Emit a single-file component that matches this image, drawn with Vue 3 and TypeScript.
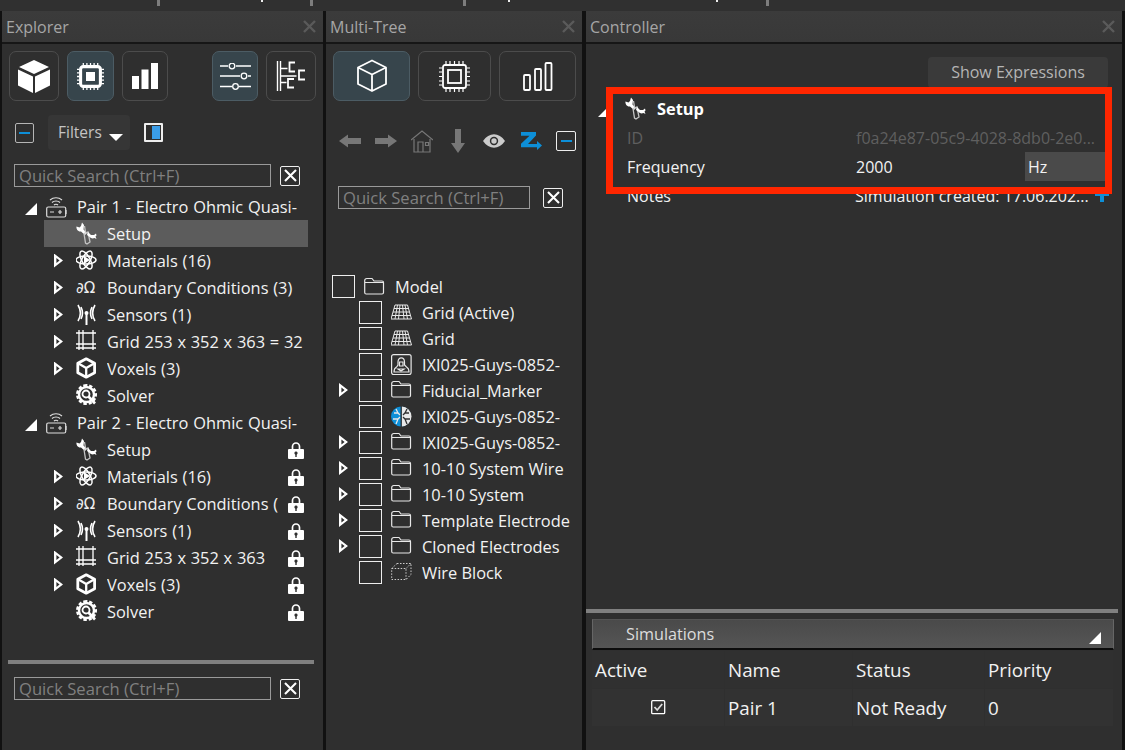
<script setup lang="ts">
const I: Record<string, string> = {
  cubeFill: `<path fill="#fff" d="M16 0 31 7 16 14 1 7ZM0 9.500l15 7V33L0 25.500ZM32 9.500V25.500L17 33V16.500Z"/>`,
  chipFill: `<g fill="none" stroke="#fff"><rect x="4" y="4" width="22" height="22" rx="3" stroke-width="3.4"/><path stroke-width="1.400" d="M7 0v3M11 0v3M15 0v3M19 0v3M23 0v3M7 27v3M11 27v3M15 27v3M19 27v3M23 27v3M0 7h3M0 11h3M0 15h3M0 19h3M0 23h3M27 7h3M27 11h3M27 15h3M27 19h3M27 23h3"/></g><rect x="10" y="10" width="10" height="10" fill="#fff"/>`,
  barsFill: `<path fill="#fff" d="M1 14h7v13H1ZM10.500 7.500h7V27h-7ZM20 1h7v26h-7Z"/>`,
  sliders: `<g fill="none" stroke="#fff" stroke-width="1.300"><path d="M0 3h8M16 3h15M0 13h20M28 13h3M0 23.500h12M19 23.500h12"/><circle cx="12" cy="3" r="2.800"/><circle cx="24" cy="13" r="2.800"/><circle cx="15.500" cy="23.500" r="2.800"/></g>`,
  branch: `<g fill="none" stroke="#fff" stroke-width="1.400"><path d="M1.500 1v30M4.500 1v30M4.500 8.500h7M4.500 16h16M4.500 22.500h6"/><path stroke-width="1.800" d="M19 2.500h-5.500v9h5.500M29 10.500h-6v9h6M18 19h-6v8.500h6"/></g>`,
  cubeOut: `<g fill="none" stroke="#fff" stroke-width="1.800" stroke-linejoin="round"><path d="M16 1.500 30 8.500V25L16 32 2 25V8.500ZM2 8.500 16 15.500 30 8.500M16 15.500V32"/></g>`,
  chipOut: `<g fill="none" stroke="#fff"><rect x="4" y="4" width="23" height="23" rx="2" stroke-width="1.800"/><rect x="9" y="9" width="13" height="13" stroke-width="1.800"/><path stroke-width="1.200" d="M7 0v3M11 0v3M15.500 0v3M20 0v3M24 0v3M7 28v3M11 28v3M15.500 28v3M20 28v3M24 28v3M0 7h3M0 11h3M0 15.500h3M0 20h3M0 24h3M28 7h3M28 11h3M28 15.500h3M28 20h3M28 24h3"/></g>`,
  barsOut: `<g fill="none" stroke="#fff" stroke-width="1.800"><rect x="1" y="13" width="6" height="15" rx="1"/><rect x="12" y="7" width="6" height="21" rx="1"/><rect x="22.500" y="1" width="6" height="27" rx="1"/></g>`,
  battery: `<g fill="none" stroke="#ddd" stroke-width="1.200"><rect x=".7" y="11" width="19" height="10" rx="1.500"/><path d="M4 16h4M12 16h4M14 14v4M20 14v4"/><path d="M6 6.500c2-2 6-2 8 0M4 4c3.500-3 8.500-3 12 0M8 9c1-1 3-1 4 0"/></g>`,
  wrench: `<path fill="#fff" d="M6 .5 5 4 3.500 5.500 .5 4.500C0 7 2 10 5 9.500L9 13l2-2L7.500 7.500 8 3Z"/><path fill="none" stroke="#c4c4c4" stroke-width="1.300" d="M8.500 4 9.500 10M8 11.500l4-1.500 2 10-3 2-1.500-1Z"/><path fill="#fff" d="M12 10l3 3h3l2-1.500.5 2-1 1 1 2.500-2-1-2 .5-1.500-.5-4-3Z"/>`,
  atom: `<g fill="none" stroke="#fff" stroke-width="1.500"><ellipse cx="10" cy="11" rx="10" ry="4"/><ellipse cx="10" cy="11" rx="10" ry="4" transform="rotate(60 10 11)"/><ellipse cx="10" cy="11" rx="10" ry="4" transform="rotate(120 10 11)"/></g><path fill="#fff" d="M8 7l6 4-6 4Z"/>`,
  sensor: `<g fill="none" stroke="#fff" stroke-width="1.600"><path d="M10.500 11v11" stroke-width="2"/><path d="M2 2c3 5 3 11 0 16M5 4c2 4 2 8 0 12M19 2c-3 5-3 11 0 16M16 4c-2 4-2 8 0 12"/></g><circle cx="10.500" cy="10" r="2" fill="#fff"/>`,
  grid: `<g fill="none" stroke="#fff" stroke-width="1.300"><path d="M3 0v20M7 0v20M17 0v20M0 3h20M0 14h20M0 18h20"/></g>`,
  voxel: `<g fill="none" stroke="#fff" stroke-linejoin="round"><path stroke-width="2.800" d="M10.200 1.800 18.600 6.300V15.700L10.200 20.200 1.800 15.700V6.300Z"/><path stroke-width="2.300" d="M2.500 6.500 10.200 11 18 6.500M10.200 11V20"/></g>`,
  solver: `<g fill="none" stroke="#fff"><path stroke-width="3" stroke-dasharray="3.200 1.800" d="M10.500 1.500a9 9 0 1 0 .01 0"/><circle cx="10.500" cy="10.500" r="7.500" stroke-width="2.400"/><circle cx="10" cy="10" r="3.500" stroke-width="1.800"/><path stroke-width="2.600" d="M12.500 12.500l6.500 7"/></g>`,
  lock: `<path fill="none" stroke="#fff" stroke-width="1.700" d="M4.500 8V5.500a3.500 3.500 0 0 1 7 0V8"/><path fill="#fff" fill-rule="evenodd" d="M1 8h14a1 1 0 0 1 1 1v8a1 1 0 0 1-1 1H1a1 1 0 0 1-1-1V9a1 1 0 0 1 1-1ZM8 10.500a1.700 1.700 0 0 0-.7 3.200V16h1.400v-2.300A1.700 1.700 0 0 0 8 10.500Z"/>`,
  folder: `<path fill="none" stroke="#e8e8e8" stroke-width="1.200" d="M.7 3.500A2 2 0 0 1 2.700 1.500H8l2 2.500h8a1.500 1.500 0 0 1 1.500 1.500V15.500a1.500 1.500 0 0 1-1.500 1.500H2.200a1.500 1.500 0 0 1-1.500-1.500ZM.7 5.500h19"/>`,
  mesh: `<g fill="none" stroke="#e8e8e8" stroke-width="1"><path d="M4 3h12.500L20.500 17H0ZM3 6.500h14.500M2 10h16.500M1 13.500h18.500M6.500 3 4 17M9 3 7.500 17M11.500 3 13 17M14 3 16.500 17"/></g>`,
  mona: `<g fill="none" stroke="#e8e8e8" stroke-width="1.200"><rect x=".6" y=".6" width="19.500" height="20" rx="2"/><path d="M7 8c0-5.500 6.500-5.500 6.500 0v3l2 2c2 1 2.500 3 2.500 5H3c0-2 .5-4 2.500-5L7 11Z"/><path d="M8.500 8h3.500v4H8.500ZM7 15h6l-3 2Z"/></g>`,
  brain: `<circle cx="10" cy="10.500" r="10" fill="#0d8fd8"/><path fill="#e8e8e8" d="M10.500 .5a10 10 0 0 1 0 20Z"/><g fill="none" stroke-width="1.300"><path stroke="#e8e8e8" d="M3 7h4l2 2M2 13h5l2-2M5 3l2 4M5 18l2-5"/><path stroke="#2f2f2f" d="M10.200 0v21M18 7h-4l-2 2M19 13h-5l-2-2M16 3l-2 4M16 18l-2-5"/></g>`,
  wire: `<g fill="none" stroke="#ccc" stroke-width="1" stroke-dasharray="1.500 1.500"><path d="M6 1.500h14v11l-5 5H.7V6.500ZM.7 6.500H15V17.500M15 6.500l5-5"/></g>`,
  left: `<path fill="#777" d="M0 7l9-6.500V4h13v6H9v3.500Z"/>`,
  right: `<path fill="#777" d="M22 7l-9-6.500V4H0v6h13v3.500Z"/>`,
  home: `<g fill="none" stroke="#777" stroke-width="1.200"><path d="M0 10 11 1l11 9"/><path d="M3 9v13h16V9M7 22V12h5v10M14.500 12.500h3v3h-3Z"/></g>`,
  down: `<path fill="#777" d="M4 0h6v14h4l-7 10-7-10h4Z"/>`,
  eye: `<path fill="#ccc" d="M0 7c6-9 16-9 22 0-6 9-16 9-22 0Z"/><circle cx="11" cy="7" r="4.200" fill="#2f2f2f"/><circle cx="11" cy="7" r="2.700" fill="#ccc"/>`,
  zed: `<path fill="#0d8fd8" d="M1 1h15v3.500L8 13h9v-3l5 4.500-5 4.500v-2.800H1v-3.500L9.500 4.800H1Z"/>`,
  plus: `<path fill="#0d8fd8" d="M5 0h4v3h5v4H9v6H5V7H0V3h5Z"/>`,
  check: `<rect x=".7" y=".7" width="13" height="13" rx="1" fill="none" stroke="#fff" stroke-width="1.300"/><path fill="none" stroke="#ddd" stroke-width="1.800" d="M3.500 7l2.700 3 5-6"/>`,
  x: `<path fill="none" stroke="#fff" stroke-width="2.100" d="M1 1l11 11M12 1 1 12"/>`,
  closeX: `<path fill="none" stroke="#5a5a5a" stroke-width="2.400" d="M1 1l11 11M12 1 1 12"/>`,
}

interface ERow { t: string; ic?: string; group?: boolean; exp?: boolean; sel?: boolean; lock?: boolean }
const pair = (n: number, last: string, bc: string, lock: boolean, sel: boolean): ERow[] => [
  { t: `Pair ${n} - Electro Ohmic Quasi-`, group: true, ic: 'battery' },
  { t: 'Setup', ic: 'wrench', sel, lock },
  { t: 'Materials (16)', ic: 'atom', exp: true, lock },
  { t: bc, ic: 'omega', exp: true, lock },
  { t: 'Sensors (1)', ic: 'sensor', exp: true, lock },
  { t: last, ic: 'grid', exp: true, lock },
  { t: 'Voxels (3)', ic: 'voxel', exp: true, lock },
  { t: 'Solver', ic: 'solver', lock },
]
const explorer: ERow[] = [
  ...pair(1, 'Grid 253 x 352 x 363 = 32', 'Boundary Conditions (3)', false, true),
  ...pair(2, 'Grid 253 x 352 x 363', 'Boundary Conditions (', true, false),
]
const multi = [
  { t: 'Grid (Active)', ic: 'mesh', exp: false },
  { t: 'Grid', ic: 'mesh', exp: false },
  { t: 'IXI025-Guys-0852-', ic: 'mona', exp: false },
  { t: 'Fiducial_Marker', ic: 'folder', exp: true },
  { t: 'IXI025-Guys-0852-', ic: 'brain', exp: false },
  { t: 'IXI025-Guys-0852-', ic: 'folder', exp: true },
  { t: '10-10 System Wire', ic: 'folder', exp: true },
  { t: '10-10 System', ic: 'folder', exp: true },
  { t: 'Template Electrode', ic: 'folder', exp: true },
  { t: 'Cloned Electrodes', ic: 'folder', exp: true },
  { t: 'Wire Block', ic: 'wire', exp: false },
]
const ticks = [157, 310, 463, 766]
const dots = [261, 508, 716]
</script>

<template>
  <div class="app">
    <div class="topstrip">
      <i v-for="x in ticks" :key="x" class="tick" :style="{ left: x + 'px' }"></i>
      <i v-for="x in dots" :key="x" class="dot" :style="{ left: x + 'px' }"></i>
    </div>
    <div class="panels">
      <!-- Explorer -->
      <section class="panel explorer">
        <header class="head"><span>Explorer</span><svg width="13" height="13" viewBox="0 0 13 13" v-html="I.closeX"></svg></header>
        <div class="toolbar">
          <button class="tb" style="width:50px"><svg width="32" height="33" viewBox="0 0 32 33" v-html="I.cubeFill"></svg></button>
          <button class="tb on" style="width:47px;margin-left:8px"><svg width="27" height="27" viewBox="0 0 30 30" v-html="I.chipFill"></svg></button>
          <button class="tb" style="width:46px;margin-left:8px"><svg width="28" height="28" viewBox="0 0 28 28" v-html="I.barsFill"></svg></button>
          <button class="tb on" style="width:46px;margin-left:44px"><svg width="31" height="27" viewBox="0 0 31 27" v-html="I.sliders"></svg></button>
          <button class="tb" style="width:50px;margin-left:8px"><svg width="30" height="33" viewBox="0 0 30 33" v-html="I.branch"></svg></button>
        </div>
        <div class="filters">
          <span class="minus"><i></i></span>
          <span class="filterbtn">Filters<em></em></span>
          <span class="toggle"><i></i></span>
        </div>
        <div class="search e1"><span class="input">Quick Search (Ctrl+F)</span><span class="xbox"><svg width="13" height="13" viewBox="0 0 13 13" v-html="I.x"></svg></span></div>
        <div class="etree">
          <div v-for="(r, i) in explorer" :key="i" class="erow" :class="{ group: r.group, sel: r.sel }">
            <template v-if="r.group">
              <span class="tri"></span>
              <svg class="gicon" width="21" height="22" viewBox="0 0 21 22" v-html="I.battery"></svg>
            </template>
            <template v-else>
              <span class="expslot"><span v-if="r.exp" class="exp"></span></span>
              <span v-if="r.ic === 'omega'" class="cicon omega">∂Ω</span>
              <svg v-else class="cicon" width="21" height="23" viewBox="0 0 21 23" v-html="I[r.ic!]"></svg>
            </template>
            <span class="etext">{{ r.t }}</span>
            <svg v-if="r.lock" class="lock" width="16" height="18" viewBox="0 0 16 18" v-html="I.lock"></svg>
          </div>
        </div>
        <div class="bar ebar"></div>
        <div class="search e2"><span class="input">Quick Search (Ctrl+F)</span><span class="xbox"><svg width="13" height="13" viewBox="0 0 13 13" v-html="I.x"></svg></span></div>
      </section>

      <!-- Multi-Tree -->
      <section class="panel mtree">
        <header class="head"><span>Multi-Tree</span><svg width="13" height="13" viewBox="0 0 13 13" v-html="I.closeX"></svg></header>
        <div class="toolbar mt">
          <button class="tb on" style="width:77px"><svg width="32" height="34" viewBox="0 0 32 34" v-html="I.cubeOut"></svg></button>
          <button class="tb" style="width:73px;margin-left:8px"><svg width="31" height="31" viewBox="0 0 31 31" v-html="I.chipOut"></svg></button>
          <button class="tb" style="width:77px;margin-left:8px"><svg width="30" height="29" viewBox="0 0 30 29" v-html="I.barsOut"></svg></button>
        </div>
        <div class="nav">
          <svg width="22" height="14" viewBox="0 0 22 14" v-html="I.left"></svg>
          <svg width="22" height="14" viewBox="0 0 22 14" style="margin-left:14px" v-html="I.right"></svg>
          <svg width="22" height="23" viewBox="0 0 22 23" style="margin-left:14px" v-html="I.home"></svg>
          <svg width="14" height="24" viewBox="0 0 14 24" style="margin-left:18px" v-html="I.down"></svg>
          <svg width="22" height="14" viewBox="0 0 22 14" style="margin-left:18px" v-html="I.eye"></svg>
          <svg width="22" height="20" viewBox="0 0 22 20" style="margin-left:15px" v-html="I.zed"></svg>
          <span class="minus m2"><i></i></span>
        </div>
        <div class="search m1"><span class="input">Quick Search (Ctrl+F)</span><span class="xbox"><svg width="13" height="13" viewBox="0 0 13 13" v-html="I.x"></svg></span></div>
        <div class="mlist">
          <div class="mrow root">
            <span class="cb"></span>
            <svg class="micon" width="21" height="19" viewBox="0 0 21 19" v-html="I.folder"></svg>
            <span class="mtext">Model</span>
          </div>
          <div v-for="(r, i) in multi" :key="i" class="mrow">
            <span class="mexp"><span v-if="r.exp" class="exp"></span></span>
            <span class="cb"></span>
            <svg class="micon" width="21" height="21" viewBox="0 0 21 21" v-html="I[r.ic]"></svg>
            <span class="mtext">{{ r.t }}</span>
          </div>
        </div>
      </section>

      <!-- Controller -->
      <section class="panel ctrl">
        <header class="head"><span>Controller</span><svg width="13" height="13" viewBox="0 0 13 13" v-html="I.closeX"></svg></header>
        <div class="exprwrap"><span class="expr">Show Expressions</span></div>
        <div class="props">
          <div class="prow setup">
            <span class="tri small"></span>
            <svg class="sicon" width="21" height="23" viewBox="0 0 21 23" v-html="I.wrench"></svg>
            <b>Setup</b>
          </div>
          <div class="prow dim"><span class="lab">ID</span><span class="val">f0a24e87-05c9-4028-8db0-2e0...</span></div>
          <div class="prow"><span class="lab">Frequency</span><span class="val short">2000</span><span class="unit">Hz</span></div>
          <div class="prow"><span class="lab">Notes</span><span class="val note">Simulation created: 17.06.202...</span><svg width="14" height="13" viewBox="0 0 14 13" v-html="I.plus"></svg></div>
        </div>
        <div class="bottom">
          <div class="bar cbar"></div>
          <div class="simhead"><span>Simulations</span><i class="tri"></i></div>
          <div class="tbl thead">
            <span>Active</span><span>Name</span><span>Status</span><span>Priority</span>
          </div>
          <div class="tbl tbody">
            <span class="chk"><svg width="15" height="15" viewBox="0 0 15 15" v-html="I.check"></svg></span>
            <span>Pair 1</span><span>Not Ready</span><span>0</span>
          </div>
        </div>
        <div class="redbox"></div>
      </section>
    </div>
  </div>
</template>

<style>
html, body { margin: 0; background: #2f2f2f; overflow: hidden; }
</style>

<style scoped>
.app {
  width: 1125px; height: 750px; overflow: hidden; background: #333;
  font-family: "Open Sans", "Noto Sans", sans-serif; font-size: 16.4px; color: #f2f2f2;
  display: flex; flex-direction: column;
}
.topstrip { height: 11px; position: relative; background: #303030; flex: none; }
.tick { position: absolute; top: 0; width: 3px; height: 6px; background: #7d7d7d; }
.dot { position: absolute; top: 0; width: 2px; height: 2px; background: #eee; }
.panels { flex: 1; display: flex; background: #111; padding: 0 3px 0 2px; gap: 3px; min-height: 0; }
.panel { background: #2f2f2f; display: flex; flex-direction: column; position: relative; flex: none; }
.explorer { width: 321px; }
.mtree { width: 256px; }
.ctrl { width: 536px; margin-left: 1px; }
.head {
  height: 31px; flex: none; border-bottom: 2px solid #161616; background: linear-gradient(#3b3b3b, #383838);
  display: flex; align-items: center; justify-content: space-between; padding: 0 7px 0 4px;
  color: #a6a6a6; font-size: 16px;
}
.toolbar { display: flex; margin: 7px 0 0 7px; height: 50px; flex: none; }
.tb {
  height: 50px; padding: 0; box-sizing: border-box; background: transparent;
  border: 1px solid #4c4c4c; border-radius: 7px; display: flex; align-items: center; justify-content: center;
}
.tb.on { background: #37454c; border-color: #4c5c64; }
.filters { display: flex; align-items: center; margin: 14px 0 0 13px; height: 35px; flex: none; }
.minus {
  width: 19px; height: 20px; box-sizing: border-box; border: 1.5px solid #b5b5b5; border-radius: 2px;
  display: flex; align-items: center; justify-content: center;
}
.minus i { width: 11px; height: 2px; background: #0d8fd8; display: block; }
.filterbtn {
  margin-left: 14px; width: 82px; height: 35px; box-sizing: border-box; padding: 0 0 2px 10px; background: #363636; border-radius: 4px;
  display: flex; align-items: center; color: #c4c4c4; font-size: 15.5px;
}
.filterbtn em {
  display: block; margin: 12px 0 0 7px; width: 0; height: 0;
  border-left: 7px solid transparent; border-right: 7px solid transparent; border-top: 7px solid #fff;
}
.toggle {
  margin-left: 14px; width: 19px; height: 19px; box-sizing: border-box; border: 2px solid #eee; border-radius: 1px;
  display: flex; justify-content: flex-end; padding: 1px;
}
.toggle i { width: 8px; background: #3a9de8; display: block; }
.search { display: flex; align-items: center; height: 23px; flex: none; }
.e1 { margin: 14px 0 0 12px; }
.e2 { margin: 13px 0 0 12px; }
.m1 { margin: 30px 0 0 12px; }
.input {
  box-sizing: border-box; height: 23px; width: 257px; border: 1px solid #9a9a9a; padding-left: 4px;
  color: #808080; line-height: 22px; font-size: 16.6px; white-space: nowrap; overflow: hidden;
}
.m1 .input { width: 192px; }
.xbox {
  margin-left: 9px; width: 20px; height: 20px; box-sizing: border-box; border: 1.5px solid #eee; border-radius: 2px;
  display: flex; align-items: center; justify-content: center;
}
.m1 .xbox { margin-left: 13px; }
.etree { margin-top: 6px; flex: none; }
.erow {
  height: 27px; display: flex; align-items: center; margin-left: 42px; width: 264px; box-sizing: border-box;
  padding: 0 4px 0 10px; white-space: nowrap;
}
.erow.group { margin-left: 0; width: 306px; padding-left: 23px; }
.erow.sel { background: #5c5c5c; }
.tri {
  width: 0; height: 0; flex: none; border-left: 12px solid transparent; border-bottom: 12px solid #fff; margin-top: 4px;
}
.gicon { margin-left: 9px; flex: none; }
.expslot { width: 9px; height: 14px; flex: none; }
.exp {
  display: block; width: 9px; height: 14px; background: #fff;
  clip-path: polygon(evenodd, 0 0, 9px 7px, 0 14px, 0 0, 2.4px 4.6px, 2.4px 9.4px, 5.6px 7px, 2.4px 4.6px, 0 0);
}
.cicon { margin-left: 13px; flex: none; width: 21px; }
.omega { font: 15px "DejaVu Sans", sans-serif; color: #eee; white-space: nowrap; }
.etext { margin-left: 10px; flex: 1; overflow: hidden; word-spacing: .5px; }
.lock { flex: none; }
.bar { height: 4px; background: #808080; flex: none; }
.ebar { margin: 35px 0 0 6px; width: 306px; }
.nav { display: flex; align-items: center; margin: 25px 0 0 13px; height: 30px; flex: none; }
.minus.m2 { width: 20px; margin-left: 14px; border-color: #eee; }
.mlist { margin-top: 64px; }
.mrow { height: 26px; display: flex; align-items: center; white-space: nowrap; }
.mrow.root { padding-left: 6px; }
.mexp { width: 9px; height: 14px; margin-left: 13px; flex: none; }
.cb { width: 23px; height: 23px; box-sizing: border-box; border: 1.5px solid #eee; flex: none; margin-left: 11px; }
.mrow.root .cb { margin-left: 0; }
.micon { margin-left: 9px; flex: none; }
.mtext { margin-left: 10px; overflow: hidden; }
.exprwrap { display: flex; justify-content: flex-end; padding: 13px 14px 0 0; flex: none; }
.expr {
  width: 180px; height: 31px; padding-bottom: 2px; box-sizing: border-box; background: #3a3a3a; border-radius: 4px; color: #b5b5b5; display: flex;
  align-items: center; justify-content: center; font-size: 16px;
}
.props { margin-top: 6px; flex: none; font-size: 16px; }
.prow { height: 29px; display: flex; align-items: center; white-space: nowrap; }
.setup { padding-left: 12px; }
.tri.small { margin-top: 8px; border-left-width: 8px; border-bottom-width: 8px; }
.sicon { margin-left: 19px; flex: none; }
.setup b { margin-left: 11px; font-weight: 700; color: #fff; font-size: 16.4px; }
.lab { padding-left: 41px; flex: none; width: 229px; }
.dim { color: #5f5f5f; }
.val { width: 297px; flex: none; }
.short { width: 169px; }
.note { width: 240px; margin-left: -1px; }
.unit { width: 84px; height: 29px; background: #4a4a4a; display: flex; align-items: center; padding-left: 3px; box-sizing: border-box; }
.bottom { margin-top: auto; flex: none; padding: 0 0 24px 0; }
.cbar { width: 532px; }
.simhead {
  margin: 6px 0 0 6px; width: 522px; height: 31px; box-sizing: border-box; background: linear-gradient(#4a4a4a, #555);
  border: 1px solid #666; border-bottom: 2px solid #0c0c0c; border-top-color: #555; display: flex; align-items: center;
  justify-content: space-between; padding: 0 12px 1px 33px; color: #ddd; font-size: 16.2px;
}
.simhead .tri { margin-top: 8px; }
.tbl { display: grid; grid-template-columns: 132px 127px 131px 128px; margin-left: 6px; gap: 0 1px; }
.tbl span { display: flex; align-items: center; padding-left: 3px; background: #323232; font-size: 18.8px; }
.thead { margin-top: 1px; height: 37px; }
.tbody { margin-top: 1px; height: 37px; }
.thead span { background: #303030; }
.tbl .chk { justify-content: center; padding: 0; }
.redbox {
  position: absolute; left: 20px; top: 76px; width: 506px; height: 107px; box-sizing: border-box;
  border: 7px solid #ff2600; pointer-events: none;
}
</style>
